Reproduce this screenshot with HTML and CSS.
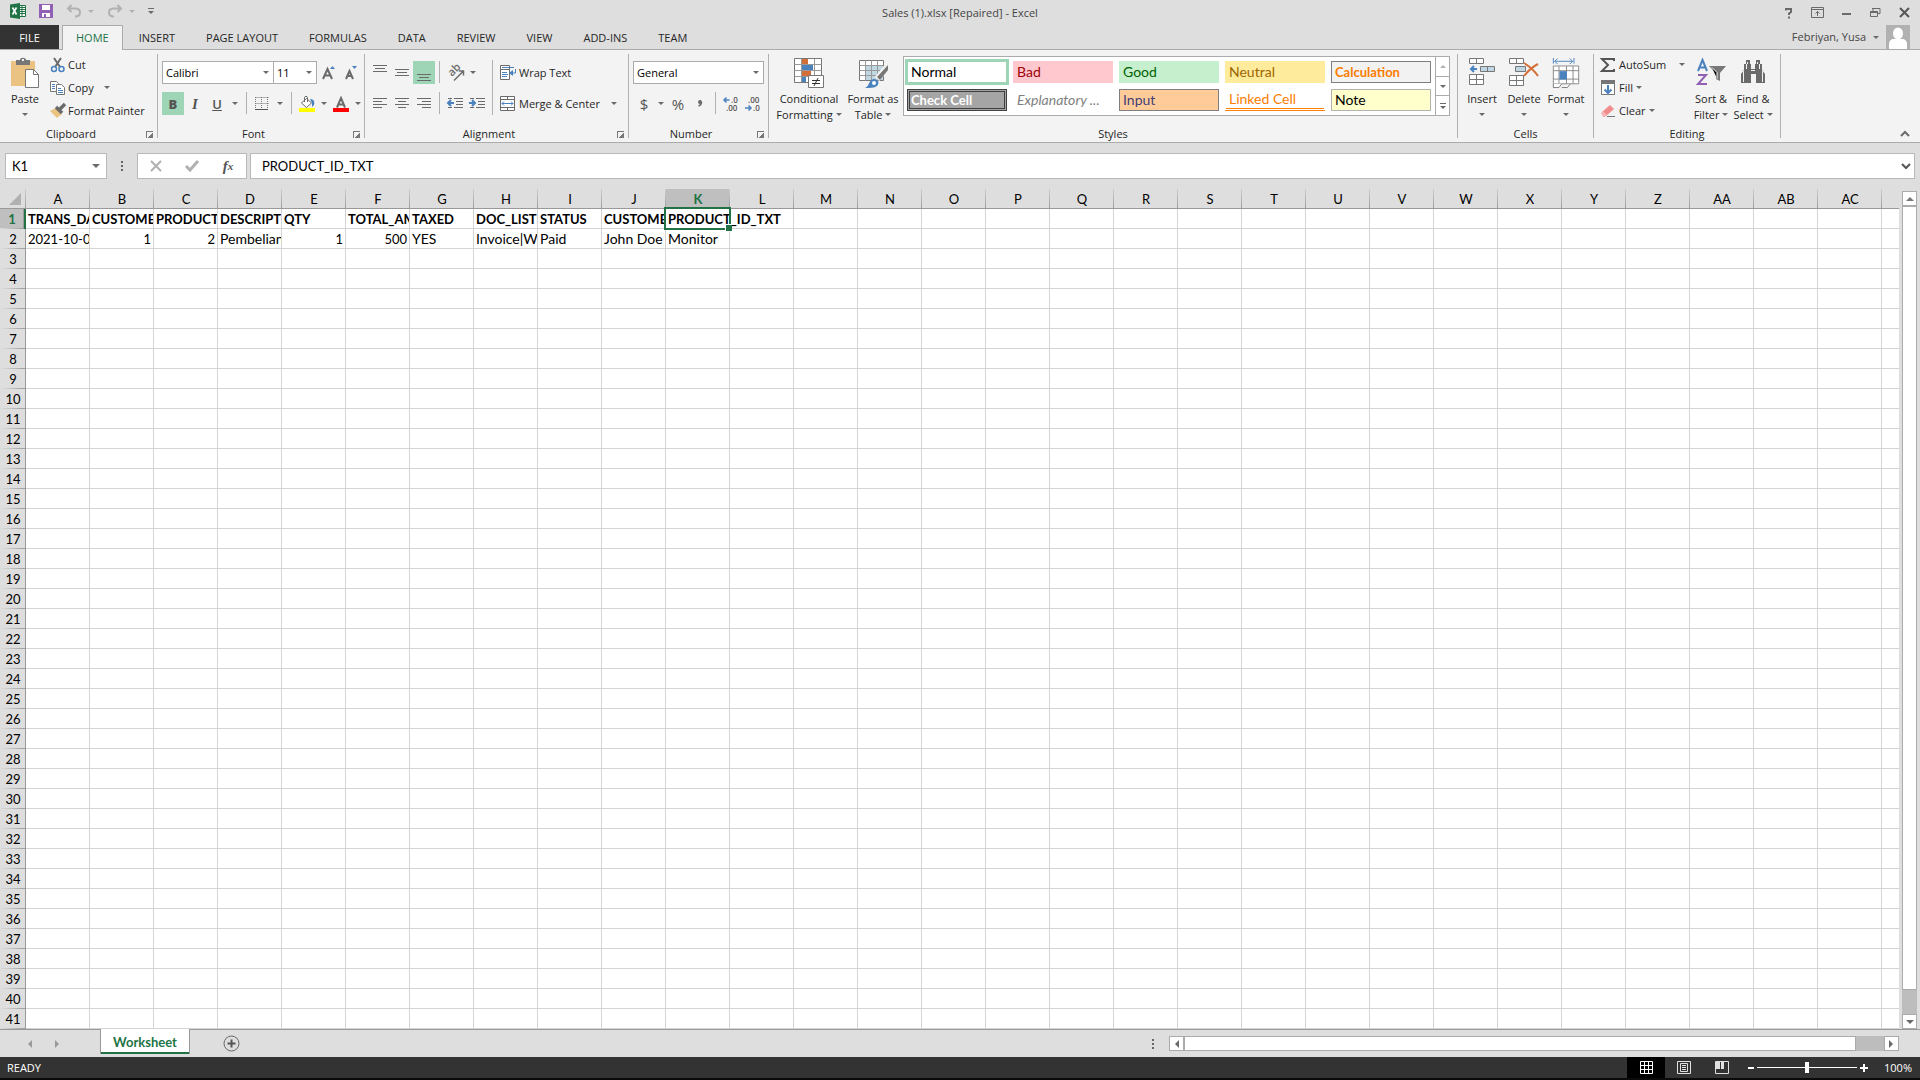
FILE: index.html
```html
<!DOCTYPE html>
<html lang="en">
<head>
  <meta charset="UTF-8">
  <meta name="viewport" content="width=device-width, initial-scale=1.0">
  <link rel="stylesheet" href="styles.css">
  <title>Sales (1).xlsx [Repaired] - Excel</title>
</head>
<body>
  <header class="titlebar">
    <div class="quick">
      <svg class="logo" width="16" height="16" viewBox="0 0 16 16"><path fill="#fff" stroke="#217346" d="M8.500 2.500h7v11h-7z"/><path stroke="#217346" d="M9 4.500h6M9 6.500h6M9 8.500h6M9 10.500h6M12 3v10"/><path fill="#217346" d="M0 1.500 10 0v16L0 14.500z"/><path stroke="#fff" stroke-width="1.600" d="M2.500 4.500l4 7M6.500 4.500l-4 7"/></svg>
      <button aria-label="Save"><svg width="14" height="14" viewBox="0 0 14 14"><path fill="#9160b5" d="M0 0h14v14H0z"/><path fill="#fff" d="M3 1h8v5H3zM3 9h8v4H3z"/><path fill="#9160b5" d="M5 10h2v3H5z"/></svg></button>
      <button aria-label="Undo"><svg width="16" height="14" viewBox="0 0 16 14"><path fill="none" stroke="#b1b1b1" stroke-width="2" d="M5.500 1 2 4.500 5.500 8M2 4.500h7c3 0 5 1.500 5 4S12 12.500 9 12.500"/></svg><i class="caret pale"></i></button>
      <button aria-label="Redo"><svg width="16" height="14" viewBox="0 0 16 14"><path fill="none" stroke="#b1b1b1" stroke-width="2" d="M10.500 1 14 4.500 10.500 8M14 4.500H7c-3 0-5 1.500-5 4s2 4 5 4"/></svg><i class="caret pale"></i></button>
      <button class="customize" aria-label="Customize Quick Access Toolbar"><i class="bar"></i><i class="caret"></i></button>
    </div>
    <div class="doc-title">Sales (1).xlsx [Repaired] - Excel</div>
    <div class="window-buttons">
      <button aria-label="Help"><svg width="10" height="12" viewBox="0 0 10 12"><path fill="none" stroke="#6a6a6a" stroke-width="2" d="M2 3.500V2h5v3L5 6.500V8M5 9.500v2"/></svg></button>
      <button aria-label="Ribbon Display Options"><svg width="13" height="11" viewBox="0 0 13 11"><path fill="none" stroke="#6a6a6a" d="M.5.500h12v10H.5zM.5 2.500h12M6.500 9V4.500M4.500 6.500l2-2 2 2"/></svg></button>
      <button aria-label="Minimize"><svg width="10" height="11" viewBox="0 0 10 11"><path fill="#6a6a6a" d="M0 6h9v2H0z"/></svg></button>
      <button aria-label="Restore Down"><svg width="11" height="11" viewBox="0 0 11 11"><path fill="none" stroke="#6a6a6a" d="M.5 4.500h7v5h-7zM3 4V1.500h7v5H8"/><path fill="#6a6a6a" d="M0 4h8v2H0zM2 1h8v1H2z"/></svg></button>
      <button aria-label="Close"><svg width="11" height="11" viewBox="0 0 11 11"><path stroke="#555" stroke-width="2" d="M1 1l9 9M10 1l-9 9"/></svg></button>
    </div>
  </header>

  <nav class="tabs">
    <a class="file" href="#file">FILE</a>
    <a class="active" href="#home">HOME</a>
    <a href="#insert">INSERT</a>
    <a href="#page-layout">PAGE LAYOUT</a>
    <a href="#formulas">FORMULAS</a>
    <a href="#data">DATA</a>
    <a href="#review">REVIEW</a>
    <a href="#view">VIEW</a>
    <a href="#add-ins">ADD-INS</a>
    <a href="#team">TEAM</a>
    <button class="account">Febriyan, Yusa <i class="caret"></i>
      <svg width="24" height="24" viewBox="0 0 24 24"><path fill="#b1b1b1" d="M0 0h24v24H0z"/><ellipse cx="12" cy="8.500" rx="5" ry="6" fill="#fff"/><path fill="#fff" d="M3 24v-5c0-3 2-5 5-5h8c3 0 5 2 5 5v5z"/></svg>
    </button>
  </nav>

  <main class="ribbon">
    <section class="group clipboard">
      <div class="group-body">
        <button class="big">
          <svg width="30" height="30" viewBox="0 0 30 30"><path fill="#eac282" d="M1 3h24v25H1z"/><path fill="#777" d="M6 2h4c0-3 6-3 6 0h4v5H6z"/><path fill="#f3f3f3" d="M12 1h2v2h-2z"/><path fill="#fff" stroke="#777" d="M15.500 11.500h8l5 5v13h-13z"/><path fill="none" stroke="#777" d="M23.500 11.500v5h5"/></svg>
          <span>Paste</span><i class="caret"></i>
        </button>
        <div class="stack">
          <button class="small"><svg width="16" height="16" viewBox="0 0 16 16"><path stroke="#6a6a6a" stroke-width="2" d="M4 1l6 9M11 1 5 10"/><g fill="none" stroke="#4a82bd" stroke-width="1.500"><circle cx="4" cy="12" r="2.500"/><circle cx="11.500" cy="12" r="2.500"/></g></svg>Cut</button>
          <button class="small"><svg width="16" height="16" viewBox="0 0 16 16"><path fill="#fff" stroke="#777" d="M.5 1.500h6l2 2v8h-8z"/><path fill="#fff" stroke="#777" d="M6.500 4.500h5l3 3v7h-8z"/><path stroke="#4a82bd" d="M2 4.500h3M2 6.500h3M2 8.500h3M8 8.500h3M8 10.500h5M8 12.500h5"/></svg>Copy<i class="caret far"></i></button>
          <button class="small"><svg width="16" height="16" viewBox="0 0 16 16"><path fill="#eac282" d="M0 8l6-3 6 6-5 4z"/><path stroke="#6a6a6a" stroke-width="3.500" d="M6 4l6 6M9 7l6-6"/></svg>Format Painter</button>
        </div>
      </div>
      <div class="group-label"><span>Clipboard</span><button class="launcher" aria-label="Clipboard settings"></button></div>
    </section>
    <i class="divider"></i>

    <section class="group font">
      <div class="group-body rows">
        <div class="row">
          <label class="combo font-name"><select aria-label="Font"><option>Calibri</option></select><i class="caret"></i></label>
          <label class="combo font-size"><select aria-label="Font Size"><option>11</option></select><i class="caret"></i></label>
          <button class="tool" aria-label="Increase Font Size"><svg width="16" height="16" viewBox="0 0 16 16"><path fill="none" stroke="#6a6a6a" stroke-width="2" d="M2 14 6.500 4 11 14M4 10.500h5"/><path fill="#4a82bd" d="M9 4l2.500-3L14 4z"/></svg></button>
          <button class="tool" aria-label="Decrease Font Size"><svg width="16" height="16" viewBox="0 0 16 16"><path fill="none" stroke="#6a6a6a" stroke-width="2" d="M3 14l3.500-8L10 14M4.500 11h4"/><path fill="#4a82bd" d="M9 1l2.500 3L14 1z"/></svg></button>
        </div>
        <div class="row">
          <button class="tool on letter"><b>B</b></button>
          <button class="tool letter"><em>I</em></button>
          <button class="tool letter"><u>U</u></button>
          <button class="drop" aria-label="Underline options"><i class="caret"></i></button>
          <i class="sep"></i>
          <button class="tool" aria-label="Borders"><svg width="14" height="14" viewBox="0 0 14 14"><path fill="none" stroke="#777" stroke-dasharray="1 1" d="M.5.500h13M.5 6.500h13M.5 0v13M6.500 0v13M12.500 0v13"/><path stroke="#555" d="M0 12.500h13"/></svg></button>
          <button class="drop" aria-label="Border options"><i class="caret"></i></button>
          <i class="sep"></i>
          <button class="tool" aria-label="Fill Color"><svg width="16" height="16" viewBox="0 0 16 16"><path fill="#fff" stroke="#6a6a6a" d="M2.500 7l5-4.500 5 4.500-5 4.500z"/><path fill="none" stroke="#6a6a6a" d="M5.500 6V1.500c0-1.500 3-1.500 3 0V6"/><path fill="#4a82bd" d="M11 3c4 0 5 3 4 6l-2 2V7z"/><path fill="#ff0" d="M0 12h16v4H0z"/></svg></button>
          <button class="drop slim" aria-label="Fill options"><i class="caret"></i></button>
          <button class="tool" aria-label="Font Color"><svg width="16" height="16" viewBox="0 0 16 16"><path fill="none" stroke="#6a6a6a" stroke-width="2" d="M4 11.500 8 2l4 9.500M5.500 8.500h5"/><path fill="red" d="M0 12h16v4H0z"/></svg></button>
          <button class="drop slim" aria-label="Font color options"><i class="caret"></i></button>
        </div>
      </div>
      <div class="group-label"><span>Font</span><button class="launcher" aria-label="Font settings"></button></div>
    </section>
    <i class="divider"></i>

    <section class="group alignment">
      <div class="group-body">
        <div class="rows">
          <div class="row">
            <button class="tool" aria-label="Top Align"><svg width="14" height="16" viewBox="0 0 14 16"><path stroke="#6a6a6a" d="M0 .5h14M2 3.500h10M0 6.500h14"/></svg></button>
            <button class="tool" aria-label="Middle Align"><svg width="14" height="16" viewBox="0 0 14 16"><path stroke="#6a6a6a" d="M0 4.500h14M2 7.500h10M0 10.500h14"/></svg></button>
            <button class="tool on" aria-label="Bottom Align"><svg width="14" height="16" viewBox="0 0 14 16"><path stroke="#6a6a6a" d="M0 9.500h14M2 12.500h10M0 15.500h14"/></svg></button>
            <i class="sep"></i>
            <button class="tool" aria-label="Orientation"><svg width="17" height="16" viewBox="0 0 17 16"><text transform="translate(5 12) rotate(-45)" font-size="11" font-weight="600" fill="#6a6a6a">ab</text><path fill="none" stroke="#6a6a6a" stroke-width="1.500" d="M7 15.500l9-9M12 6h4.500v4.500"/></svg></button>
            <button class="drop" aria-label="Orientation options"><i class="caret"></i></button>
          </div>
          <div class="row">
            <button class="tool" aria-label="Align Left"><svg width="14" height="12" viewBox="0 0 14 12"><path stroke="#6a6a6a" d="M0 .5h14M0 3.500h9M0 6.500h14M0 9.500h9"/></svg></button>
            <button class="tool" aria-label="Center"><svg width="14" height="12" viewBox="0 0 14 12"><path stroke="#6a6a6a" d="M0 .5h14M3 3.500h8M0 6.500h14M3 9.500h8"/></svg></button>
            <button class="tool" aria-label="Align Right"><svg width="14" height="12" viewBox="0 0 14 12"><path stroke="#6a6a6a" d="M0 .5h14M5 3.500h9M0 6.500h14M5 9.500h9"/></svg></button>
            <i class="sep"></i>
            <button class="tool" aria-label="Decrease Indent"><svg width="16" height="12" viewBox="0 0 16 12"><path stroke="#6a6a6a" d="M7 .5h9M9 3.500h7M9 6.500h7M7 9.500h9M1 .5h4M1 9.500h4"/><path fill="none" stroke="#4a82bd" stroke-width="2" d="M7 5H1M4 2 1 5l3 3"/></svg></button>
            <button class="tool" aria-label="Increase Indent"><svg width="16" height="12" viewBox="0 0 16 12"><path stroke="#6a6a6a" d="M7 .5h9M9 3.500h7M9 6.500h7M7 9.500h9M1 .5h4M1 9.500h4"/><path fill="none" stroke="#4a82bd" stroke-width="2" d="M0 5h6M3 2l3 3-3 3"/></svg></button>
          </div>
        </div>
        <i class="sep tall"></i>
        <div class="rows">
          <button class="small wide"><svg width="16" height="16" viewBox="0 0 16 16"><path fill="#fff" stroke="#6a6a6a" d="M.5.500h9v4h-9zM.5 4.500h9v10h-9z"/><path fill="none" stroke="#4a82bd" d="M2 2.500h12M2 7.500h5M2 9.500h6M2 11.500h5M15.500 4v4H10"/><path fill="#4a82bd" d="M13 5v6L9 8z"/></svg>Wrap Text</button>
          <button class="small wide"><svg width="16" height="16" viewBox="0 0 16 16"><path fill="#fff" stroke="#6a6a6a" d="M.5.500h14v14H.5z"/><path fill="none" stroke="#6a6a6a" d="M.5 3.500h14M.5 11.500h14M7.500.500v3M7.500 11.500v3"/><path fill="none" stroke="#4a82bd" d="M2 7.500h11M4 5.500l-2 2 2 2M11 5.500l2 2-2 2"/></svg>Merge &amp; Center<i class="caret far"></i></button>
        </div>
      </div>
      <div class="group-label"><span>Alignment</span><button class="launcher" aria-label="Alignment settings"></button></div>
    </section>
    <i class="divider"></i>

    <section class="group number">
      <div class="group-body rows">
        <div class="row">
          <label class="combo number-format"><select aria-label="Number Format"><option>General</option></select><i class="caret"></i></label>
        </div>
        <div class="row">
          <button class="tool symbol">$</button>
          <button class="drop slim" aria-label="Accounting options"><i class="caret"></i></button>
          <button class="tool symbol">%</button>
          <button class="tool symbol" aria-label="Comma Style"><svg width="6" height="8" viewBox="0 0 6 8"><circle cx="3" cy="2" r="2" fill="#6a6a6a"/><path fill="none" stroke="#6a6a6a" stroke-width="1.500" d="M4.500 2c0 2-1 3.500-3 4"/></svg></button>
          <i class="sep"></i>
          <button class="tool" aria-label="Increase Decimal"><svg width="16" height="14" viewBox="0 0 16 14"><path fill="none" stroke="#4a82bd" stroke-width="1.500" d="M6.500 3H1M3.500.500 1 3l2.500 2.500"/><text x="8" y="6" font-size="8" font-weight="600" fill="#555">.0</text><text x="3" y="14" font-size="8" font-weight="600" fill="#555">.00</text></svg></button>
          <button class="tool" aria-label="Decrease Decimal"><svg width="16" height="14" viewBox="0 0 16 14"><path fill="none" stroke="#4a82bd" stroke-width="1.500" d="M0 11h6M3.500 8.500 6 11l-2.500 2.500"/><text x="3" y="6" font-size="8" font-weight="600" fill="#555">.00</text><text x="8" y="14" font-size="8" font-weight="600" fill="#555">.0</text></svg></button>
        </div>
      </div>
      <div class="group-label"><span>Number</span><button class="launcher" aria-label="Number settings"></button></div>
    </section>
    <i class="divider"></i>

    <section class="group styles">
      <div class="group-body">
        <button class="big conditional">
          <svg width="30" height="30" viewBox="0 0 30 30"><path fill="#fff" stroke="#777" d="M.5.500h27v24H.5z"/><path fill="none" stroke="#999" d="M.5 6.500h27M.5 12.500h27M.5 18.500h27M7.500.500v24M20.500.500v24"/><path fill="#d36f38" d="M8 1h6v5H8zM8 13h9v5H8z"/><path fill="#4a82bd" d="M8 7h11v5H8zM8 19h4v5H8z"/><path fill="#fff" stroke="#777" d="M14.500 17.500h15v12h-15z"/><path stroke="#333" d="M18 22.500h8M18 25.500h8M24 20l-4 8"/></svg>
          <span>Conditional</span><span>Formatting <i class="caret"></i></span>
        </button>
        <button class="big table">
          <svg width="30" height="30" viewBox="0 0 30 30"><path fill="#fff" stroke="#777" d="M1.500 2.500h24v20h-24z"/><path fill="#bfd6e3" d="M8 8h17v14H8z"/><path fill="none" stroke="#999" d="M1.500 7.500h24M1.500 12.500h24M1.500 17.500h24M7.500 2.500v20M13.500 2.500v20M19.500 2.500v20"/><path stroke="#f3f3f3" stroke-width="6" d="M19 21 29 9"/><path fill="#777" d="M30 7v5l-8 10-3-3z"/><path fill="#4a82bd" d="M7 30c5-2 3-8 9-9 4 0 6 4 3 7-3 2-7 2-12 2z"/><circle cx="16" cy="25" r="2" fill="#fff"/></svg>
          <span>Format as</span><span>Table <i class="caret"></i></span>
        </button>
        <div class="gallery">
          <div class="swatches">
            <button class="normal">Normal</button>
            <button class="bad">Bad</button>
            <button class="good">Good</button>
            <button class="neutral">Neutral</button>
            <button class="calculation">Calculation</button>
            <button class="check">Check Cell</button>
            <button class="explanatory">Explanatory ...</button>
            <button class="input">Input</button>
            <button class="linked">Linked Cell</button>
            <button class="note">Note</button>
          </div>
          <div class="gallery-scroll">
            <button aria-label="Previous styles"><i class="caret up pale"></i></button>
            <button aria-label="Next styles"><i class="caret"></i></button>
            <button aria-label="More styles"><i class="bar"></i><i class="caret"></i></button>
          </div>
        </div>
      </div>
      <div class="group-label"><span>Styles</span></div>
    </section>
    <i class="divider"></i>

    <section class="group cells">
      <div class="group-body">
        <button class="big">
          <svg width="30" height="30" viewBox="0 0 30 30"><path fill="#fff" stroke="#777" d="M2.500.500h14v5h-14zM9.500.500v5M2.500 16.500h14v10h-14zM9.500 16.500v10M2.500 21.500h14"/><path fill="#bfd6e3" stroke="#777" d="M13.500 8.500h14v5h-14zM20.500 8.500v5"/><path fill="none" stroke="#4a82bd" stroke-width="2" d="M10 11H4M7 8l-3 3 3 3"/></svg>
          <span>Insert</span><i class="caret"></i>
        </button>
        <button class="big">
          <svg width="30" height="30" viewBox="0 0 30 30"><path fill="#fff" stroke="#777" d="M.5.500h14v5H.5zM7.500.500v5M.5 17.500h14v10H.5zM7.500 17.500v10M.5 22.500h14"/><path fill="#bfd6e3" stroke="#777" d="M6.500 8.500h10v5h-10z"/><path fill="none" stroke="#d36f38" stroke-width="2" d="M15 5c5 3 10 7 14 13M29 6c-6 3-10 7-14 12"/></svg>
          <span>Delete</span><i class="caret"></i>
        </button>
        <button class="big">
          <svg width="30" height="32" viewBox="0 0 30 32"><path fill="none" stroke="#4a82bd" d="M1.500 0v6M23.500 0v6M3 3.500h19M6 .5l-3 3 3 3M19 .5l3 3-3 3"/><path fill="#fff" stroke="#888" d="M1.500 8.500h27v19h-27zM1.500 13.500h27M1.500 22.500h27M7.500 8.500v19M15.500 8.500v19M22.500 8.500v19"/><path fill="#4a82bd" d="M8 14h8v9H8z"/><path fill="#fff" stroke="#777" d="M1.500 27.500v4h6l3-4M10.500 31.500h6l3-4"/></svg>
          <span>Format</span><i class="caret"></i>
        </button>
      </div>
      <div class="group-label"><span>Cells</span></div>
    </section>
    <i class="divider"></i>

    <section class="group editing">
      <div class="group-body">
        <div class="stack">
          <button class="small"><svg width="16" height="16" viewBox="0 0 16 16"><path fill="none" stroke="#555" stroke-width="2" d="M14 4V2H2l6 6-6 6h12v-2"/></svg>AutoSum<i class="caret far"></i></button>
          <button class="small"><svg width="16" height="16" viewBox="0 0 16 16"><path fill="#fff" stroke="#777" d="M1.500 1.500h13v13h-13z"/><path fill="#777" d="M1 0h14v4H1z"/><path fill="none" stroke="#4a82bd" stroke-width="2" d="M8 5v8M4.500 9.500 8 13l3.500-3.500"/></svg>Fill<i class="caret"></i></button>
          <button class="small"><svg width="16" height="16" viewBox="0 0 16 16"><path fill="#f08c8c" d="M2 9l8-7 4 4-8 7z"/><path fill="#f6b4b4" d="M1 10l2-2 4 4-2 2H3z"/><path stroke="#777" d="M7 13.500h8"/></svg>Clear<i class="caret"></i></button>
        </div>
        <button class="big">
          <svg width="30" height="30" viewBox="0 0 30 30"><path fill="none" stroke="#4a82bd" stroke-width="2" d="M2 13 6.500 2 11 13M4 9.500h5"/><path fill="none" stroke="#9160b5" stroke-width="2" d="M2 17h8L2 26h9"/><path fill="#777" d="M13 8h17l-6 7v8l-4-2v-6z"/><path stroke="#fff" d="M16 9.500l5 5v6"/></svg>
          <span>Sort &amp;</span><span>Filter <i class="caret"></i></span>
        </button>
        <button class="big">
          <svg width="28" height="30" viewBox="0 0 28 30"><path fill="#6a6a6a" d="M7 2h4v4h1v5h4V6h1V2h4v4h2v6l3 4v9h-9v-9h-5v9H2v-9l3-4V6h2z"/><path fill="none" stroke="#f3f3f3" d="M4.500 13v11M7.500 6v5M20.500 6v5M23.500 13v11M12 12.500h4M8.500 4v2M18.500 4v2"/></svg>
          <span>Find &amp;</span><span>Select <i class="caret"></i></span>
        </button>
      </div>
      <div class="group-label"><span>Editing</span></div>
    </section>
    <i class="divider"></i>
    <button class="collapse" aria-label="Collapse the Ribbon"><svg width="10" height="8" viewBox="0 0 10 8"><path fill="none" stroke="#6a6a6a" stroke-width="2" d="M1 6l4-4 4 4"/></svg></button>
  </main>

  <div class="formula-bar">
    <div class="name-box"><input aria-label="Name Box" value="K1"><button aria-label="Name Box list"><i class="caret large"></i></button></div>
    <i class="dots"></i>
    <div class="formula-buttons">
      <button aria-label="Cancel"><svg width="12" height="12" viewBox="0 0 12 12"><path stroke="#b1b1b1" stroke-width="2" d="M1 1l10 10M11 1 1 11"/></svg></button>
      <button aria-label="Enter"><svg width="14" height="12" viewBox="0 0 14 12"><path fill="none" stroke="#b1b1b1" stroke-width="3" d="M1 6l4 4 8-9"/></svg></button>
      <button class="fx" aria-label="Insert Function">f<sub>x</sub></button>
    </div>
    <div class="formula-input"><input aria-label="Formula" value="PRODUCT_ID_TXT"><button aria-label="Expand Formula Bar"><svg width="10" height="8" viewBox="0 0 10 8"><path fill="none" stroke="#555" stroke-width="2" d="M1 2l4 4 4-4"/></svg></button></div>
  </div>

  <div class="workspace">
    <div class="sheet" id="sheet"><table class="grid" id="grid"></table></div>
    <div class="scroll vertical">
      <button aria-label="Scroll up"><i class="caret large up"></i></button>
      <div class="track"><div class="thumb"></div></div>
      <button aria-label="Scroll down"><i class="caret large"></i></button>
    </div>
  </div>

  <div class="sheet-bar">
    <div class="sheet-nav">
      <button aria-label="Previous sheet"><svg width="5" height="8" viewBox="0 0 5 8"><path fill="#999" d="M5 0v8L1 4z"/></svg></button>
      <button aria-label="Next sheet"><svg width="5" height="8" viewBox="0 0 5 8"><path fill="#999" d="M0 0v8l4-4z"/></svg></button>
    </div>
    <a class="sheet-tab" href="#worksheet">Worksheet</a>
    <button class="add-sheet" aria-label="New sheet"><svg width="17" height="17" viewBox="0 0 17 17"><circle cx="8.500" cy="8.500" r="7.500" fill="none" stroke="#666"/><path stroke="#555" stroke-width="2" d="M4.500 8.500h8M8.500 4.500v8"/></svg></button>
    <i class="dots"></i>
    <div class="scroll horizontal">
      <button aria-label="Scroll left"><svg width="5" height="8" viewBox="0 0 5 8"><path fill="#6a6a6a" d="M5 0v8L1 4z"/></svg></button>
      <div class="track"><div class="thumb"></div></div>
      <button aria-label="Scroll right"><svg width="5" height="8" viewBox="0 0 5 8"><path fill="#6a6a6a" d="M0 0v8l4-4z"/></svg></button>
    </div>
  </div>

  <footer class="status">
    <span class="ready">READY</span>
    <button class="view on" aria-label="Normal view"><svg width="13" height="13" viewBox="0 0 13 13"><path fill="none" stroke="#fff" d="M.5.500h12v12H.5zM4.500 0v13M8.500 0v13M0 4.500h13M0 8.500h13"/></svg></button>
    <button class="view" aria-label="Page Layout view"><svg width="14" height="13" viewBox="0 0 14 13"><path fill="none" stroke="#e0e0e0" d="M.5.500h13v12H.5zM3.500 2.500h7v8h-7zM5 4.500h4M5 6.500h4M5 8.500h4"/></svg></button>
    <button class="view" aria-label="Page Break Preview"><svg width="14" height="13" viewBox="0 0 14 13"><path fill="none" stroke="#e0e0e0" d="M.5.500h13v12H.5z"/><path fill="#e0e0e0" d="M1 1h4v7H1zM6 1h3v7H6z"/></svg></button>
    <button class="zoom" aria-label="Zoom out"><svg width="8" height="8" viewBox="0 0 8 8"><path fill="#fff" d="M1 3h6v2H1z"/></svg></button>
    <input type="range" min="0" max="100" value="50" aria-label="Zoom">
    <button class="zoom" aria-label="Zoom in"><svg width="8" height="8" viewBox="0 0 8 8"><path fill="#fff" d="M0 3h8v2H0zM3 0h2v8H3z"/></svg></button>
    <button class="percent">100%</button>
  </footer>

  <script src="script.js"></script>
</body>
</html>
```

FILE: styles.css
```css
* {
  box-sizing: border-box;
}
body {
  margin: 0;
  height: 100vh;
  display: flex;
  flex-direction: column;
  overflow: hidden;
  background: #dedede;
  color: #262626;
  font-family: "Open Sans", sans-serif;
  font-size: 11px;
  line-height: 16px;
}
button, input, select {
  font: inherit;
  color: inherit;
  margin: 0;
  padding: 0;
  border: none;
  background: none;
}
button {
  display: flex;
  align-items: center;
  justify-content: center;
  white-space: nowrap;
}
a {
  color: inherit;
  text-decoration: none;
}
svg {
  display: block;
  flex: none;
  overflow: visible;
}

/* small shared marks */
.caret {
  flex: none;
  display: inline-block;
  border: 3px solid transparent;
  border-top-color: #6a6a6a;
  border-bottom: none;
}
.caret.up {
  border-top: none;
  border-bottom: 3px solid #6a6a6a;
}
.caret.large {
  border-width: 4px;
  border-bottom: none;
}
.caret.large.up {
  border-top: none;
  border-bottom: 4px solid #777;
}
.caret.pale {
  border-top-color: #b1b1b1;
}
.caret.up.pale {
  border-bottom-color: #b1b1b1;
}
.bar {
  width: 6px;
  height: 1px;
  background: #6a6a6a;
}
.dots {
  width: 2px;
  height: 10px;
  background: repeating-linear-gradient(#666 0 2px, transparent 2px 4px);
}

/* title bar */
.titlebar {
  height: 25px;
  display: grid;
  grid-template-columns: 1fr auto 1fr;
  align-items: center;
  flex: none;
}
.quick {
  display: flex;
  align-items: center;
  padding-left: 10px;
  gap: 13px;
  padding-bottom: 3px;
}
.quick button {
  gap: 6px;
}
.quick .customize {
  flex-direction: column;
  gap: 2px;
}
.doc-title {
  color: #444;
}
.window-buttons {
  display: flex;
  justify-content: flex-end;
  padding-right: 1px;
}
.window-buttons button {
  width: 29px;
  height: 22px;
}

/* ribbon tabs */
.tabs {
  height: 25px;
  display: flex;
  gap: 1px;
  flex: none;
  box-shadow: inset 0 -1px #ababab;
}
.tabs a {
  padding: 4px 14px;
  border: 1px solid transparent;
  border-bottom: none;
}
.tabs .file {
  width: 59px;
  margin-right: 2px;
  text-align: center;
  background: #333;
  color: #fff;
  height: 24px;
}
.tabs .active {
  padding: 4px 13px;
  background: #f3f3f3;
  border-color: #ababab;
  color: #217346;
}
.account {
  margin-left: auto;
  padding-right: 10px;
  gap: 7px;
  height: 24px;
  color: #444;
}

/* ribbon */
.ribbon {
  height: 93px;
  display: flex;
  flex: none;
  background: #f3f3f3;
  border-bottom: 1px solid #ababab;
}
.group {
  display: flex;
  flex-direction: column;
}
.group-body {
  flex: 1;
  display: flex;
}
.group-label {
  height: 16px;
  display: flex;
}
.group-label span {
  flex: 1;
  text-align: center;
}
.launcher {
  width: 7px;
  height: 7px;
  margin: 5px 4px;
  border-top: 1px solid #777;
  border-left: 1px solid #777;
  background: linear-gradient(135deg, transparent 55%, #777 55%);
}
.divider {
  width: 1px;
  height: 84px;
  margin-top: 4px;
  background: #b1b1b1;
}
.clipboard { width: 157px; }
.font { width: 206px; }
.alignment { width: 263px; }
.number { width: 139px; }
.styles { width: 688px; }
.cells { width: 135px; }
.editing { width: 186px; }
.font .group-body,
.alignment .group-body,
.number .group-body { padding-left: 4px; }
.cells .group-body { padding-left: 3px; }
.editing .group-body,
.styles .group-body { padding-left: 6px; }

.big {
  width: 42px;
  padding-top: 8px;
  flex-direction: column;
  justify-content: flex-start;
}
.big svg {
  height: 30px;
  margin-bottom: 3px;
}
.big > .caret {
  margin-top: 6px;
}
.big span .caret {
  margin-bottom: 3px;
}
.clipboard .big { width: 50px; }
.conditional { width: 68px; }
.big.table { width: 60px; }
.stack {
  padding-top: 3px;
}
.editing .stack {
  width: 90px;
}
.small {
  width: 100%;
  height: 23px;
  gap: 3px;
  justify-content: flex-start;
}
.clipboard .small {
  gap: 2px;
}
.stack .far {
  margin-left: 8px;
}
.editing .stack .far {
  margin-left: auto;
  margin-right: 5px;
}
.rows {
  display: flex;
  flex-direction: column;
  gap: 8px;
  padding-top: 11px;
}
.row {
  display: flex;
  height: 23px;
}
.tool {
  width: 22px;
  height: 23px;
}
.tool.on {
  background: #9fd5b7;
}
.drop {
  width: 14px;
}
.drop.slim {
  width: 12px;
}
.sep {
  width: 1px;
  height: 22px;
  margin: 0 4px;
  background: #b1b1b1;
}
.sep.tall {
  height: 55px;
  margin: 10px 7px 0 4px;
}
.letter {
  font-size: 13px;
  font-weight: 600;
  color: #555;
}
.letter b {
  font-weight: 800;
}
.letter em {
  font-family: "Liberation Serif", serif;
  font-size: 15px;
  font-weight: bold;
}
.symbol {
  font-size: 15px;
  color: #555;
}
.wide .far {
  margin-left: 8px;
}
.combo {
  position: relative;
  height: 23px;
  background: #fff;
  border: 1px solid #ababab;
}
.combo select {
  width: 100%;
  height: 100%;
  padding-left: 3px;
  appearance: none;
  color: #000;
}
.combo .caret {
  position: absolute;
  right: 4px;
  top: 9px;
  pointer-events: none;
}
.font-name { width: 112px; }
.font-size { width: 43px; margin-right: 1px; border-left: none; }
.number-format { width: 131px; }

/* cell styles gallery */
.gallery {
  height: 60px;
  margin-top: 6px;
  display: flex;
  background: #fff;
  border: 1px solid #ababab;
}
.swatches {
  display: grid;
  grid-template-columns: repeat(5, 100px);
  grid-auto-rows: 22px;
  gap: 6px;
  padding: 4px 4px 4px 3px;
  font-family: Lato, sans-serif;
  font-size: 14px;
}
.swatches button {
  justify-content: flex-start;
  padding: 0 0 1px 3px;
  border: 1px solid transparent;
}
.swatches .normal {
  color: #000;
  outline: 3px solid #9fd5b7;
  outline-offset: -1px;
}
.swatches .bad { background: #ffc7ce; color: #9c0006; }
.swatches .good { background: #c6efce; color: #006100; }
.swatches .neutral { background: #ffeb9c; color: #9c6500; }
.swatches .calculation { background: #f2f2f2; color: #fa7d00; border-color: #7f7f7f; font-size: 13px; font-weight: bold; }
.swatches .check { background: #a5a5a5; color: #fff; border: 3px double #3f3f3f; padding-left: 1px; font-size: 13px; font-weight: bold; }
.swatches .explanatory { color: #7f7f7f; font-style: italic; }
.swatches .input { background: #ffcc99; color: #3f3f76; border-color: #7f7f7f; }
.swatches .linked { color: #fa7d00; border-bottom: 3px double #ff8001; }
.swatches .note { background: #ffffcc; color: #000; border-color: #b2b2b2; }
.gallery-scroll {
  width: 14px;
  display: flex;
  flex-direction: column;
  border-left: 1px solid #ababab;
}
.gallery-scroll button {
  flex: 1;
  flex-direction: column;
  gap: 2px;
  border-bottom: 1px solid #ababab;
}
.gallery-scroll button:last-child {
  border-bottom: none;
}
.collapse {
  margin: auto 10px 4px auto;
}

/* formula bar */
.formula-bar {
  height: 46px;
  padding: 10px 5px;
  display: flex;
  flex: none;
  font-family: Lato, sans-serif;
  font-size: 13px;
  color: #000;
}
.formula-bar .dots {
  margin: 8px 14px;
}
.name-box,
.formula-buttons,
.formula-input {
  display: flex;
  height: 26px;
  background: #fff;
  border: 1px solid #b9b9b9;
}
.name-box {
  width: 102px;
}
.name-box input {
  flex: 1;
  min-width: 0;
  padding-left: 6px;
}
.name-box button {
  width: 20px;
}
.formula-buttons {
  width: 110px;
  margin-right: 3px;
}
.formula-buttons button {
  flex: 1;
}
.formula-buttons .fx {
  color: #555;
  font-family: "Liberation Serif", serif;
  font-size: 15px;
  font-style: italic;
  font-weight: bold;
}
.fx sub {
  font-size: 11px;
}
.formula-input {
  flex: 1;
}
.formula-input input {
  flex: 1;
  padding-left: 11px;
}
.formula-input button {
  width: 16px;
}

/* sheet */
.workspace {
  flex: 1;
  min-height: 0;
  display: flex;
  gap: 3px;
  padding-right: 3px;
}
.sheet {
  flex: 1;
  min-width: 0;
  overflow: hidden;
  background: linear-gradient(#999, #999) right 20px / 1px 100% no-repeat;
  padding-right: 1px;
}
.grid {
  table-layout: fixed;
  border-spacing: 0;
  width: 0;
  font-family: Lato, sans-serif;
  font-size: 13px;
  line-height: 18px;
  color: #000;
}
.sheet .grid {
  clip-path: none;
}
.grid th,
.grid td {
  height: 20px;
  padding: 0 2px;
  white-space: nowrap;
}
.grid td {
  overflow: hidden;
  padding-top: 1px;
  background: #fff;
  border-right: 1px solid #d4d4d4;
  border-bottom: 1px solid #d4d4d4;
  font-size: 14px;
}
.grid th {
  font-weight: normal;
  text-align: center;
  background: #dedede;
}
.grid thead th {
  width: 64px;
  background:
    linear-gradient(#999, #999) bottom / 100% 1px no-repeat,
    linear-gradient(#d0d0d0, #999) right / 1px 100% no-repeat,
    #dedede;
}
.grid thead .corner {
  width: 26px;
}
.corner svg {
  margin-left: 7px;
}
.grid tbody th {
  background:
    linear-gradient(#999, #999) right / 1px 100% no-repeat,
    linear-gradient(90deg, #dedede, #999) bottom / 100% 1px no-repeat,
    #dedede;
}
.grid thead .picked,
.grid tbody .picked {
  background-color: #bfbfbf;
  color: #217346;
  font-weight: bold;
}
.grid tbody .picked {
  border-right: 2px solid #217346;
}
.grid .heading td {
  font-size: 13px;
  font-weight: bold;
}
.grid .num,
.grid .date {
  font-size: 13px;
}
.grid .num {
  text-align: right;
}
.grid .current {
  position: relative;
  overflow: visible;
}
.current::before {
  content: "";
  position: absolute;
  inset: -2px;
  border: 2px solid #217346;
}
.current::after {
  content: "";
  position: absolute;
  right: -3px;
  bottom: -3px;
  width: 6px;
  height: 6px;
  background: #217346;
  border: solid #fff;
  border-width: 1px 0 0 1px;
}

/* scroll bars */
.scroll {
  display: flex;
}
.scroll button {
  width: 15px;
  height: 15px;
  flex: none;
  background: #fff;
  border: 1px solid #ababab;
}
.scroll .track {
  flex: 1;
  display: flex;
  background: #bdbdbd;
}
.scroll .thumb {
  background: #fff;
  border: 1px solid #ababab;
}
.vertical {
  width: 15px;
  margin-top: 2px;
  flex-direction: column;
}
.vertical .track {
  flex-direction: column;
}
.vertical .thumb {
  height: 97%;
}
.horizontal {
  width: 730px;
  height: 15px;
}
.horizontal .thumb {
  width: 96%;
}

/* sheet tabs */
.sheet-bar {
  height: 28px;
  flex: none;
  display: flex;
  align-items: center;
  padding-right: 21px;
  border-top: 1px solid #999;
}
.sheet-nav {
  width: 100px;
  padding-left: 15px;
  display: flex;
}
.sheet-nav button {
  width: 28px;
}
.sheet-tab {
  align-self: flex-start;
  margin-top: -1px;
  width: 90px;
  height: 25px;
  padding-top: 5px;
  text-align: center;
  background: #fff;
  border: solid #999;
  border-width: 0 1px;
  box-shadow: inset 0 -2px #217346;
  color: #217346;
  font-family: Lato, sans-serif;
  font-size: 13px;
  font-weight: bold;
}
.add-sheet {
  margin-left: 33px;
}
.sheet-bar .dots {
  margin: 0 15px 0 auto;
}

/* status bar */
.status {
  height: 23px;
  flex: none;
  display: flex;
  align-items: center;
  padding: 0 8px 0 7px;
  background: #333;
  border-bottom: 2px solid #0a0a0a;
  color: #fff;
}
.ready {
  margin-right: auto;
}
.view {
  width: 38px;
  height: 21px;
}
.view.on {
  background: #000;
}
.view:nth-of-type(3) {
  margin-right: 4px;
}
.zoom {
  width: 11px;
}
.status input {
  width: 100px;
  height: 11px;
  margin: 0 1px;
  appearance: none;
  background: linear-gradient(#fff, #fff) center / 100% 1px no-repeat;
}
.status input::-webkit-slider-thumb {
  appearance: none;
  width: 4px;
  height: 11px;
  background: #fff;
}
.percent {
  margin-left: 15px;
}
```

FILE: script.js
```js
const rows = [
  ['TRANS_DATE', 'CUSTOMER_ID', 'PRODUCT_ID', 'DESCRIPTION', 'QTY', 'TOTAL_AMOUNT', 'TAXED', 'DOC_LIST', 'STATUS', 'CUSTOMER_ID_TXT', 'PRODUCT_ID_TXT'],
  ['2021-10-08', 1, 2, 'Pembelian', 1, 500, 'YES', 'Invoice|W', 'Paid', 'John Doe', 'Monitor']
];
const current = { row: 0, col: 10 };

function columnName(index) {
  const last = String.fromCharCode(65 + index % 26);
  return index < 26 ? last : columnName(Math.floor(index / 26) - 1) + last;
}

function cellClass(value, r, c) {
  if (r === current.row && c === current.col) return 'current';
  if (typeof value === 'number') return 'num';
  if (/^\d{4}-/.test(value)) return 'date';
  return '';
}

function addCell(tr, tag, text, className) {
  const cell = document.createElement(tag);
  cell.textContent = text;
  if (className) cell.className = className;
  tr.appendChild(cell);
  return cell;
}

function drawGrid() {
  const sheet = document.getElementById('sheet');
  const grid = document.getElementById('grid');
  const fullCols = Math.floor((sheet.clientWidth - 26) / 64);
  const rowCount = Math.ceil((sheet.clientHeight - 20) / 20);

  grid.innerHTML = '';
  const head = grid.createTHead().insertRow();
  addCell(head, 'th', '', 'corner').innerHTML =
    '<svg width="13" height="13" viewBox="0 0 13 13"><path fill="#b1b1b1" d="M12 0v12H0z"/></svg>';
  for (let c = 0; c <= fullCols; c++) {
    // the last column is cut by the window edge, so it has no letter
    addCell(head, 'th', c < fullCols ? columnName(c) : '', c === current.col ? 'picked' : '');
  }

  const body = grid.createTBody();
  for (let r = 0; r < rowCount; r++) {
    const tr = body.insertRow();
    if (r === 0) tr.className = 'heading';
    addCell(tr, 'th', r + 1, r === current.row ? 'picked' : '');
    for (let c = 0; c <= fullCols; c++) {
      const value = rows[r] && rows[r][c] !== undefined ? rows[r][c] : '';
      addCell(tr, 'td', value, cellClass(value, r, c));
    }
  }
}

drawGrid();
window.addEventListener('resize', drawGrid);
```
